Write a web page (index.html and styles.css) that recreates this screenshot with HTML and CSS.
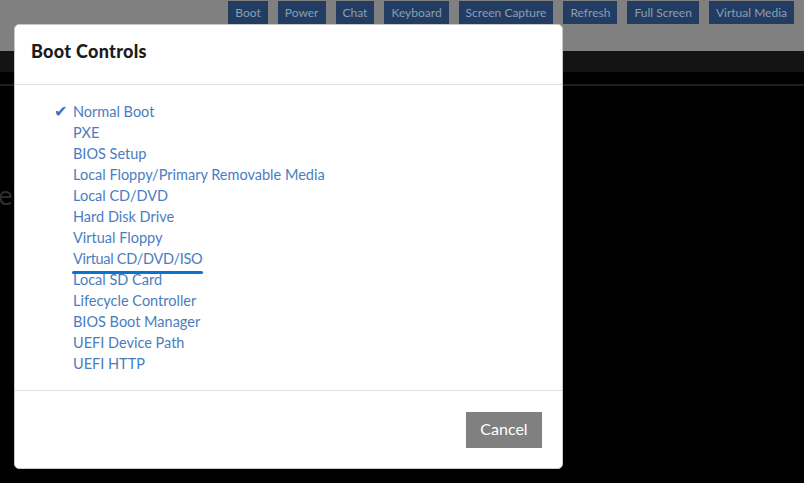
FILE: index.html
```html
<!DOCTYPE html>
<html>
<head>
<meta charset="utf-8">
<link rel="stylesheet" href="styles.css">
</head>
<body>
<div class="page">
  <div class="topbar">
    <span class="tbtn">Boot</span>
    <span class="tbtn">Power</span>
    <span class="tbtn">Chat</span>
    <span class="tbtn">Keyboard</span>
    <span class="tbtn">Screen Capture</span>
    <span class="tbtn">Refresh</span>
    <span class="tbtn">Full Screen</span>
    <span class="tbtn">Virtual Media</span>
  </div>
  <div class="subbar"></div>
  <div class="console">
    <div class="console-line"></div>
    <div class="console-text">e</div>
  </div>

  <div class="modal">
    <div class="modal-header">
      <h1 class="modal-title">Boot Controls</h1>
    </div>
    <ul class="modal-body">
      <li class="item"><span class="check">✔</span>Normal Boot</li>
      <li class="item">PXE</li>
      <li class="item">BIOS Setup</li>
      <li class="item">Local Floppy/Primary Removable Media</li>
      <li class="item">Local CD/DVD</li>
      <li class="item">Hard Disk Drive</li>
      <li class="item">Virtual Floppy</li>
      <li class="item"><span class="hover">Virtual CD/DVD/ISO</span></li>
      <li class="item">Local SD Card</li>
      <li class="item">Lifecycle Controller</li>
      <li class="item">BIOS Boot Manager</li>
      <li class="item">UEFI Device Path</li>
      <li class="item">UEFI HTTP</li>
    </ul>
    <div class="modal-footer">
      <span class="cancel">Cancel</span>
    </div>
  </div>
</div>
</body>
</html>
```

FILE: styles.css
```css
* { box-sizing: border-box; }
html, body {
  margin: 0;
  padding: 0;
  background: #000;
}
body {
  width: 804px;
  height: 483px;
  overflow: hidden;
  font-family: Lato, "Liberation Sans", sans-serif;
}
.page {
  position: relative;
  width: 804px;
  height: 483px;
  display: flex;
  flex-direction: column;
}
.topbar {
  height: 51px;
  background: #808080;
  display: flex;
  justify-content: flex-end;
  align-items: flex-start;
  gap: 10px;
  padding: 1px 10px 0 0;
}
.tbtn {
  height: 23px;
  line-height: 23px;
  padding: 0 7px;
  background: #223d61;
  color: #8d9db3;
  font-size: 12px;
  white-space: nowrap;
}
.subbar {
  height: 21px;
  background: #141414;
}
.console {
  flex: 1;
  background: #000;
  padding-top: 12px;
}
.console-line {
  height: 2px;
  background: #1e1e1e;
}
.console-text {
  margin-top: 98px;
  color: #2e2e2e;
  font-size: 24px;
  line-height: 26px;
  font-family: "DejaVu Sans", sans-serif;
  text-indent: -2px;
}
.modal {
  position: absolute;
  left: 14px;
  top: 24px;
  width: 549px;
  height: 445px;
  background: #fff;
  border: 1px solid #c8c8c8;
  border-radius: 5px;
  display: flex;
  flex-direction: column;
}
.modal-header {
  height: 60px;
  border-bottom: 1px solid #dcdce2;
  padding: 16px 0 0 16px;
}
.modal-title {
  margin: 0;
  font-size: 18px;
  font-weight: 900;
  color: #1b1b1b;
  line-height: 20px;
  letter-spacing: 0.3px;
}
.modal-body {
  list-style: none;
  margin: 0;
  padding: 16px 0 16px 58px;
  border-bottom: 1px solid #dcdce2;
}
.item {
  height: 21px;
  line-height: 21px;
  font-size: 14.5px;
  color: #4a7dc0;
  white-space: nowrap;
}
.check {
  display: inline-block;
  width: 19px;
  margin-left: -19px;
  font-family: "DejaVu Sans", sans-serif;
  font-size: 16px;
  color: #3e74bb;
}
.hover {
  display: inline-block;
  position: relative;
  letter-spacing: -0.3px;
}
.hover::after {
  content: "";
  position: absolute;
  left: -1px;
  right: -1px;
  bottom: -5px;
  height: 3px;
  border-radius: 2px;
  background: #0b72cf;
}
.modal-footer {
  flex: 1;
  display: flex;
  justify-content: flex-end;
  align-items: flex-start;
  padding: 21px 20px 0 0;
}
.cancel {
  width: 76px;
  height: 36px;
  line-height: 34px;
  text-align: center;
  background: #808080;
  color: #fff;
  font-size: 16px;
}
```
